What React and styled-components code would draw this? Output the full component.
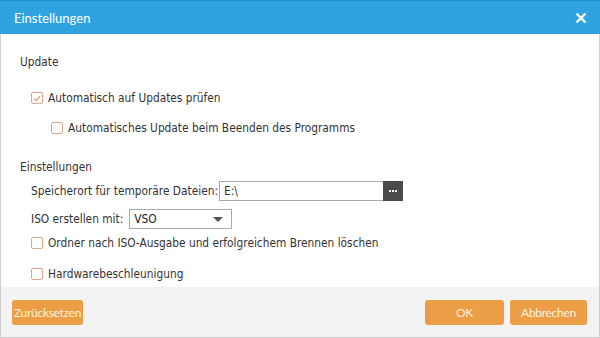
import styled, { createGlobalStyle } from "styled-components";

const GlobalStyle = createGlobalStyle`
    html, body {
        margin: 0;
        padding: 0;
        background: #ffffff;
    }
    * {
        box-sizing: border-box;
    }
`;

const Window = styled.div`
    width: 600px;
    height: 338px;
    display: flex;
    flex-direction: column;
    font-family: "DejaVu Sans Condensed", "DejaVu Sans", sans-serif;
    font-size: 11.8px;
    color: #333333;
`;

const TitleBar = styled.div`
    height: 34px;
    flex-shrink: 0;
    display: flex;
    align-items: center;
    justify-content: space-between;
    padding: 0 14px;
    background: #2ea3df;
    border-top: 1px solid #1d8fcf;
    color: #ffffff;
`;

const Title = styled.span`
    font-family: "Lato", "Open Sans", sans-serif;
    font-size: 13px;
`;

const Close = styled.button`
    display: flex;
    align-items: center;
    justify-content: center;
    width: 20px;
    height: 20px;
    padding: 0;
    margin-right: -5px;
    border: none;
    background: transparent;
    cursor: pointer;
`;

const Body = styled.div`
    flex: 1;
    display: flex;
    flex-direction: column;
    padding: 20px 19px 0;
    background: #ffffff;
    border-left: 1px solid #cfcfcf;
    border-right: 1px solid #cfcfcf;
`;

const SectionTitle = styled.div`
    line-height: 16px;
    margin-top: ${(props) => props.$top || 0}px;
`;

const Row = styled.div`
    display: flex;
    align-items: center;
    height: ${(props) => props.$height || 16}px;
    margin-top: ${(props) => props.$top || 0}px;
    padding-left: ${(props) => props.$indent || 0}px;
`;

const Check = styled.span`
    width: 12px;
    height: 12px;
    margin-right: 5px;
    border: 1px solid #dba88b;
    border-radius: 2px;
    display: flex;
    align-items: center;
    justify-content: center;
    flex-shrink: 0;
`;

const Label = styled.span`
    margin-right: 1px;
    white-space: nowrap;
`;

const Input = styled.div`
    display: flex;
    width: 184px;
    height: 20px;
    border: 1px solid #a9a9a9;
`;

const InputText = styled.span`
    flex: 1;
    padding-left: 4px;
    line-height: 18px;
`;

const Browse = styled.span`
    width: 20px;
    margin: -1px -1px -1px 0;
    background: #4a4a4a;
    display: flex;
    align-items: center;
    justify-content: center;
    gap: 1px;
`;

const Dot = styled.i`
    width: 2px;
    height: 2px;
    background: #ffffff;
`;

const Select = styled.div`
    display: flex;
    align-items: center;
    justify-content: space-between;
    width: 103px;
    height: 20px;
    margin-left: 5px;
    padding: 0 8px 0 4px;
    border: 1px solid #a9a9a9;
    color: #222222;
`;

const Arrow = styled.span`
    width: 0;
    height: 0;
    border-left: 5px solid transparent;
    border-right: 5px solid transparent;
    border-top: 5px solid #555555;
`;

const Footer = styled.div`
    height: 51px;
    flex-shrink: 0;
    display: flex;
    align-items: flex-start;
    padding: 13px 12px 0 11px;
    gap: 6px;
    background: #f3f3f3;
    border: 1px solid #cfcfcf;
    border-top: none;
`;

const Button = styled.button`
    width: ${(props) => props.$width}px;
    height: 25px;
    padding: 0;
    border: none;
    border-radius: 3px;
    background: #eb9e45;
    color: #fdf1df;
    font-family: "Lato", "Open Sans", sans-serif;
    font-size: 12px;
    letter-spacing: -0.3px;
    cursor: pointer;
`;

const Spacer = styled.div`
    flex: 1;
`;

const CheckBox = ({ checked }) => (
    <Check>
        {checked && (
            <svg width="8" height="7" viewBox="0 0 8 7">
                <path d="M1 3.5 L3.2 5.6 L7 1.2" fill="none" stroke="#e39a73" strokeWidth="1.2" />
            </svg>
        )}
    </Check>
);

const App = () => {
    return (
        <>
            <GlobalStyle />
            <Window>
                <TitleBar>
                    <Title>Einstellungen</Title>
                    <Close>
                        <svg width="12" height="12" viewBox="0 0 12 12">
                            <path d="M1.5 1.5 L10.5 10.5 M10.5 1.5 L1.5 10.5" stroke="#ffffff" strokeWidth="2.4" />
                        </svg>
                    </Close>
                </TitleBar>

                <Body>
                    <SectionTitle>Update</SectionTitle>
                    <Row $top={20} $indent={11}>
                        <CheckBox checked />
                        <Label>Automatisch auf Updates prüfen</Label>
                    </Row>
                    <Row $top={14} $indent={31}>
                        <CheckBox />
                        <Label>Automatisches Update beim Beenden des Programms</Label>
                    </Row>

                    <SectionTitle $top={23}>Einstellungen</SectionTitle>
                    <Row $top={6} $indent={11} $height={20}>
                        <Label>Speicherort für temporäre Dateien:</Label>
                        <Input>
                            <InputText>E:\</InputText>
                            <Browse>
                                <Dot />
                                <Dot />
                                <Dot />
                            </Browse>
                        </Input>
                    </Row>
                    <Row $top={8} $indent={11} $height={20}>
                        <Label>ISO erstellen mit:</Label>
                        <Select>
                            <span>VSO</span>
                            <Arrow />
                        </Select>
                    </Row>
                    <Row $top={6} $indent={11}>
                        <CheckBox />
                        <Label>Ordner nach ISO-Ausgabe und erfolgreichem Brennen löschen</Label>
                    </Row>
                    <Row $top={15} $indent={11}>
                        <CheckBox />
                        <Label>Hardwarebeschleunigung</Label>
                    </Row>
                </Body>

                <Footer>
                    <Button $width={71}>Zurücksetzen</Button>
                    <Spacer />
                    <Button $width={79}>OK</Button>
                    <Button $width={77}>Abbrechen</Button>
                </Footer>
            </Window>
        </>
    );
};

export default App;
